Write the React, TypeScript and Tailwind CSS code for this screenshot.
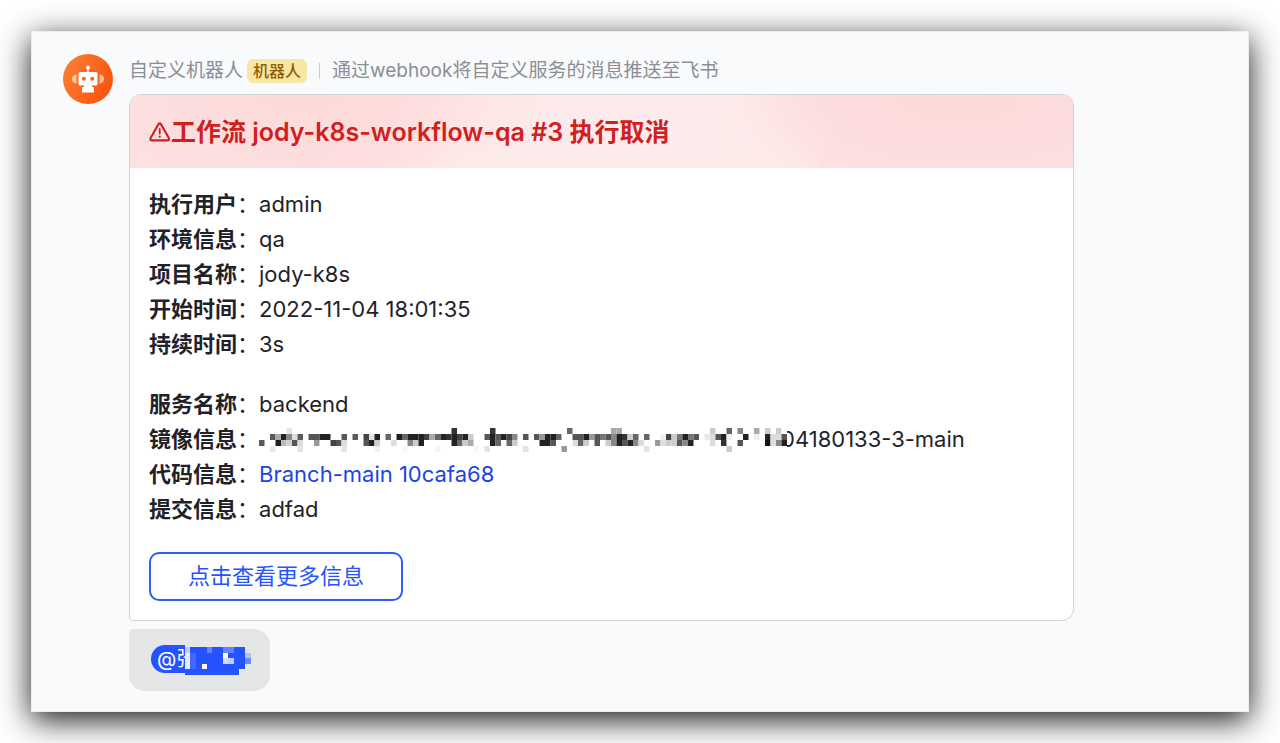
import type { ReactNode } from "react";

type Cell = [col: number, row: number, shade: string];

const CELL_W = 5.5;
const CELL_H = 6;

const columns: Record<number, [string, string, string, string]> = {
  0: ["", "", "5a", ""], 2: ["", "5a", "", "e8"], 3: ["", "aa", "1e", ""], 4: ["", "22", "bb", ""],
  5: ["e4", "88", "d0", ""], 6: ["", "dd", "55", ""], 7: ["", "5a", "dd", "e4"], 9: ["", "55", "", ""],
  10: ["", "55", "99", ""], 11: ["", "22", "", ""], 12: ["", "22", "", ""], 13: ["", "", "44", ""],
  14: ["", "", "55", ""], 15: ["", "5a", "dd", "e4"], 17: ["", "5a", "", ""], 19: ["", "44", "55", ""],
  20: ["", "e0", "22", ""], 21: ["", "22", "cc", "f0"], 23: ["", "66", "", ""], 24: ["", "", "dd", ""],
  25: ["", "1e", "", ""], 26: ["", "66", "", "f8"], 27: ["", "22", "88", ""], 28: ["", "22", "cc", ""],
  29: ["", "22", "22", ""], 30: ["", "44", "", ""], 31: ["", "aa", "", ""], 32: ["", "66", "", "f4"],
  33: ["", "22", "", ""], 34: ["", "33", "", ""], 35: ["33", "22", "22", ""], 36: ["", "44", "66", ""],
  37: ["", "22", "cc", ""], 38: ["", "cc", "aa", ""], 39: ["", "", "", "f8"], 41: ["", "55", "", "e4"],
  42: ["33", "22", "22", ""], 43: ["", "55", "66", ""], 44: ["", "22", "", ""], 45: ["", "44", "66", ""],
  46: ["", "88", "cc", ""], 48: ["", "55", "", "e4"], 50: ["", "55", "", ""], 51: ["", "99", "22", ""],
  52: ["", "22", "22", ""], 53: ["", "22", "55", ""], 54: ["", "66", "", ""], 55: ["", "", "", "99"],
  56: ["66", "", "", ""], 57: ["", "55", "dd", ""], 58: ["", "55", "66", ""], 59: ["", "22", "cc", ""],
  60: ["", "99", "", ""], 61: ["", "55", "55", ""], 62: ["", "77", "", ""], 63: ["", "55", "cc", ""],
  64: ["aa", "88", "88", ""], 65: ["aa", "22", "22", ""], 66: ["", "33", "55", ""], 67: ["", "cc", "22", ""],
  68: ["", "66", "88", ""], 69: ["", "", "dd", ""], 70: ["", "66", "", "e4"], 72: ["", "", "99", ""],
  73: ["", "ee", "dd", ""], 74: ["", "44", "cc", ""], 75: ["", "cc", "cc", ""], 76: ["", "77", "55", ""],
  77: ["", "22", "88", ""], 78: ["", "77", "22", ""], 79: ["", "55", "", ""], 81: ["", "e8", "", ""],
  82: ["cc", "dd", "dd", ""], 83: ["", "55", "", ""], 84: ["", "22", "33", ""], 85: ["66", "ee", "", "cc"],
  87: ["88", "", "55", ""], 88: ["", "22", "", ""], 90: ["aa", "ee", "", ""], 92: ["cc", "22", "11", ""],
  93: ["", "dd", "dd", ""], 94: ["cc", "dd", "88", ""], 95: ["ff", "55", "22", "ff"],
};

const imageCells: Cell[] = Object.entries(columns).flatMap(([col, shades]) =>
  shades.flatMap((s, row): Cell[] => (s ? [[Number(col), row, `#${s}${s}${s}`]] : [])),
);

function ImageMosaic() {
  return (
    <svg className="relative z-10 shrink-0" width="528" height="24" viewBox="0 0 528 24" aria-hidden="true">
      {imageCells.map(([col, row, fill]) => (
        <rect key={`${col}-${row}`} x={col * CELL_W} y={row * CELL_H} width={CELL_W} height={CELL_H} fill={fill} />
      ))}
    </svg>
  );
}

function NameMosaic() {
  return (
    <svg className="absolute top-0.5 left-[34px]" width="66" height="28" viewBox="0 0 66 28" shapeRendering="crispEdges" aria-hidden="true">
      <path d="M0 0H60V22H54V28H0Z" fill="#2453ff" />
      <path d="M0 0H5V6H0Z" fill="#c3cbf5" />
      <path d="M0 6H5V22H0Z" fill="#e9ecfb" />
      <path d="M5 6H11V22H5Z" fill="#4468ff" />
      <path d="M17 17H22V22H17Z" fill="#fff" />
      <path d="M22 0H27V6H22Z" fill="#6884fa" />
      <path d="M38 0H49V6H38Z" fill="#6482ff" />
      <path d="M38 6H43V11H38Z" fill="#fff" />
      <path d="M38 11H43V17H38Z" fill="#d2dcff" />
      <path d="M43 11H49V17H43Z" fill="#c0cdff" />
      <path d="M60 6H66V11H60Z" fill="#b4c0f3" />
      <path d="M60 11H66V17H60Z" fill="#6f8bf8" />
    </svg>
  );
}

function RobotAvatar() {
  return (
    <svg className="h-[50px] w-[50px] shrink-0" viewBox="0 0 50 50" role="img" aria-label="自定义机器人">
      <defs>
        <linearGradient id="avatar" x1="0" y1="0" x2="1" y2="0.5">
          <stop offset="0" stopColor="#fb8238" />
          <stop offset="1" stopColor="#fa5610" />
        </linearGradient>
      </defs>
      <circle cx="25" cy="25" r="25" fill="url(#avatar)" />
      <path d="M13.5 20.5V29.5A4.5 4.5 0 0 1 13.5 20.5ZM36.5 20.5V29.5A4.5 4.5 0 0 0 36.5 20.5Z" fill="#ffc594" />
      <circle cx="25" cy="13.5" r="2" fill="#fff" />
      <path d="M24.3 14H25.7V18.5H24.3Z" fill="#ffe9d2" />
      <path d="M17 18H33Q34.500 18 34.500 19.500V30Q34.500 31.500 33 31.500H29V33H30Q31 33 31 34V38.500H19V34Q19 33 20 33H21V31.500H17Q15.500 31.500 15.500 30V19.500Q15.500 18 17 18Z" fill="#fff" />
      <circle cx="20.8" cy="24.8" r="2" fill="#f26a22" />
      <circle cx="29.3" cy="24.8" r="2" fill="#f26a22" />
    </svg>
  );
}

function WarningIcon() {
  return (
    <svg className="h-5 w-[22px] shrink-0" viewBox="0 0 22 20" fill="none" stroke="currentColor" strokeWidth="2.1" strokeLinecap="round" strokeLinejoin="round" aria-hidden="true">
      <path d="M9.4 2.3Q10.7 0.500 12 2.3L19.800 16Q20.500 18.200 18.600 18.400H2.800Q0.900 18.200 1.600 16Z" />
      <path d="M10.7 7V11.5" strokeWidth="1.8" />
      <path d="M10.7 14.7V14.8" strokeWidth="2.2" />
    </svg>
  );
}

function Row({ label, children }: { label: string; children: ReactNode }) {
  return (
    <div className="flex">
      <dt className="shrink-0">
        <span className="font-bold">{label}</span>：
      </dt>
      <dd className="flex items-center">{children}</dd>
    </div>
  );
}

export default function App() {
  return (
    <div className="flex min-h-screen overflow-hidden bg-white p-[31px] font-['Inter','Noto_Sans_CJK_SC',sans-serif] text-[#1f2329]">
      <main className="flex flex-1 items-start gap-4 border border-[#eceef0] bg-[#f9fafc] pt-[22px] pr-8 pb-5 pl-[31px] shadow-[0_8px_30px_rgba(0,0,0,0.9)]">
        <RobotAvatar />
        <div className="flex min-w-0 flex-1 flex-col items-start">
          <header className="flex h-[34px] items-center text-[19px] leading-8 text-[#8a8e95]">
            <span>自定义机器人</span>
            <span className="ml-1 rounded-md bg-[#fae6a4] px-1.5 text-base leading-6 font-medium text-[#8f5f00]">机器人</span>
            <span className="mx-3 h-4 w-px bg-[#c9cbd0]" />
            <span>通过webhook将自定义服务的消息推送至飞书</span>
          </header>

          <article className="mt-1.5 w-full max-w-[945px] overflow-hidden rounded-xl rounded-bl-sm border border-[#d0d3d8] bg-white">
            <h1 className="flex h-[73px] items-center bg-[radial-gradient(230px_100px_at_88%_0%,#fedad8_0%,#fcdcde_55%,transparent_100%),radial-gradient(260px_90px_at_18%_0%,#fddad9_0%,transparent_100%),linear-gradient(105deg,#fde2e3_0%,#fcdfe0_20%,#ffe0e3_28%,#fdeaea_36%,#fdecec_60%,#fde8e7_73%,#ffe1e5_74%,#ffe1e4_100%)] px-[19px] text-[25px] leading-9 font-semibold text-[#d01f1f]">
              <WarningIcon />
              <span>工作流 jody-k8s-workflow-qa #3 执行取消</span>
            </h1>
            <div className="px-[19px] pt-[19px] pb-[19px] text-[22px] leading-[35px]">
              <dl>
                <Row label="执行用户">admin</Row>
                <Row label="环境信息">qa</Row>
                <Row label="项目名称">jody-k8s</Row>
                <Row label="开始时间">2022-11-04 18:01:35</Row>
                <Row label="持续时间">3s</Row>
              </dl>
              <dl className="mt-[25px]">
                <Row label="服务名称">backend</Row>
                <Row label="镜像信息">
                  <ImageMosaic />
                  <span className="-ml-1.5">04180133-3-main</span>
                </Row>
                <Row label="代码信息">
                  <a href="#commit" className="text-[#1a45e0]">Branch-main 10cafa68</a>
                </Row>
                <Row label="提交信息">adfad</Row>
              </dl>
              <button type="button" className="mt-[25px] block h-[49px] rounded-[10px] border-2 border-[#2b5cff] bg-white px-[37px] text-[#2453ff]">
                点击查看更多信息
              </button>
            </div>
          </article>

          <div className="mt-2 rounded-2xl rounded-tl-sm bg-[#e5e6e8] px-[22px] py-4">
            <div className="relative h-[30px] w-[97px]">
              <span className="block h-7 w-[34px] rounded-l-full bg-[#2453ff] pl-1.5 text-xl leading-7 whitespace-nowrap text-white">@张</span>
              <NameMosaic />
            </div>
          </div>
        </div>
      </main>
    </div>
  );
}
